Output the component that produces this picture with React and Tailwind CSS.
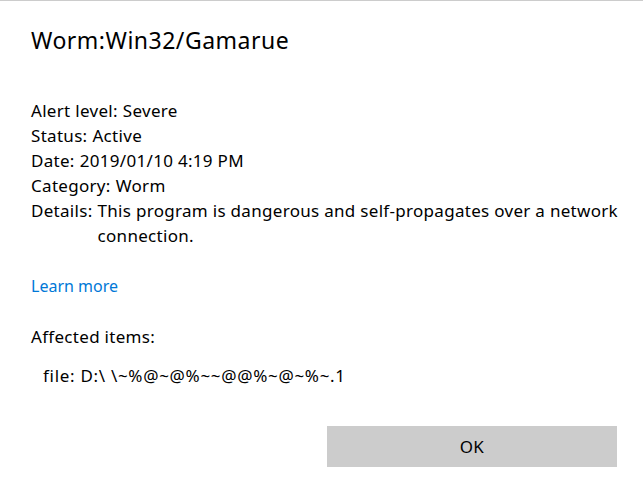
export default function App() {
  const rows = [
    ['Alert level:', 'Severe'],
    ['Status:', 'Active'],
    ['Date:', '2019/01/10 4:19 PM'],
    ['Category:', 'Worm'],
  ]

  return (
    <div
      className="w-[643px] h-[497px] bg-white border-t border-[#cccccc] text-black overflow-hidden"
      style={{ fontFamily: '"Noto Sans", "Open Sans", sans-serif' }}
    >
      <div className="pl-[31px] pr-[24px]">
        <h1 className="pt-[24px] text-[23px] leading-[30px] tracking-[0.5px] font-normal">Worm:Win32/Gamarue</h1>

        {/* threat details */}
        <div className="mt-[43px] text-[17px] leading-[25px] tracking-[0.3px]">
          {rows.map(([label, value]) => (
            <div key={label} className="flex gap-[5px]">
              <span>{label}</span>
              <span>{value}</span>
            </div>
          ))}
          <div className="flex gap-[5px]">
            <span className="shrink-0">Details:</span>
            <span>This program is dangerous and self-propagates over a network connection.</span>
          </div>
        </div>

        <a href="#" className="block mt-[26px] text-[16px] leading-[25px] text-[#0078d7] w-fit">
          Learn more
        </a>

        <p className="mt-[25px] text-[17px] leading-[25px] tracking-[0.3px]">Affected items:</p>
        <p className="mt-[14px] pl-[12px] text-[17px] leading-[25px] tracking-[0.7px]">file: D:\ \~%@~@%~~@@%~@~%~.1</p>

        <div className="flex justify-end mt-[38px] pr-[2px]">
          <button className="w-[290px] h-[41px] bg-[#cccccc] text-[17px] tracking-[0.3px]">OK</button>
        </div>
      </div>
    </div>
  )
}
